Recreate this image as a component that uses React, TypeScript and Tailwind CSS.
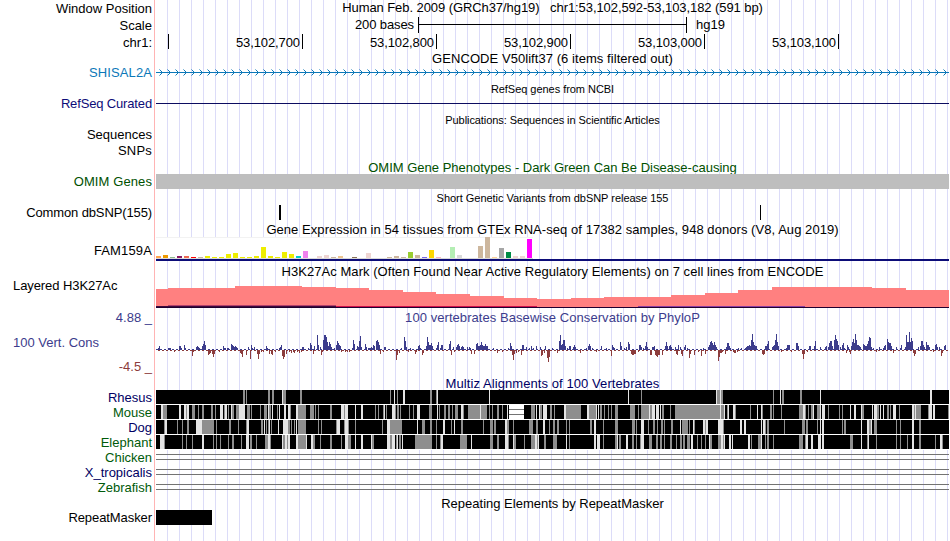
import type { ReactNode } from "react";

type Pair = [number, number];
type Chunk = { x: number; values: Pair[] };
type Tone = "g" | "l";
type Stripes = { x: number; tone: Tone; values: Pair[] };

const LEFT = 156;
const WIDTH = 793;

const labels = [
  { text: "Window Position", className: "h-[17px] leading-[17px] text-black" },
  { text: "Scale", className: "h-[17px] leading-[17px] text-black" },
  { text: "chr1:", className: "h-[16px] leading-[17px] text-black" },
  { text: "SHISAL2A", className: "mt-4 h-[14px] leading-[14px] tracking-[0.1px] text-[#0c78b8]" },
  { text: "RefSeq Curated", className: "mt-[17px] h-[15px] leading-[14px] tracking-[-0.15px] text-[#0c0c78]" },
  { text: "Sequences", className: "mt-[15px] h-[15px] leading-[16px] text-black" },
  { text: "SNPs", className: "h-4 leading-[18px] tracking-[0.2px] text-black" },
  { text: "OMIM Genes", className: "mt-4 h-[15px] leading-[16px] tracking-[0.1px] text-[#005000]" },
  { text: "Common dbSNP(155)", className: "mt-4 h-[15px] leading-[16px] tracking-[-0.12px] text-black" },
  { text: "FAM159A", className: "mt-[17px] h-[25px] leading-[27px] tracking-[0.14px] text-black" },
  {
    text: "Layered H3K27Ac",
    className: "mt-[17px] h-[29px] pl-[13px] text-left leading-[14px] tracking-[-0.08px] text-black",
  },
  { text: "4.88 _", className: "h-[18px] leading-[19px] text-[#3c3c8c]" },
  { text: "100 Vert. Cons", className: "h-[32px] pl-[13px] text-left leading-[33px] text-[#3c3c8c]" },
  { text: "-4.5 _", className: "h-[18px] leading-[18px] text-[#8c3c3c]" },
  { text: "Rhesus", className: "mt-[14px] h-[15px] leading-[16px] text-[#000064]" },
  { text: "Mouse", className: "h-[15px] leading-[16px] text-[#005a0a]" },
  { text: "Dog", className: "h-[15px] leading-[16px] text-[#000064]" },
  { text: "Elephant", className: "h-[15px] leading-[16px] text-[#005a0a]" },
  { text: "Chicken", className: "h-[15px] leading-[16px] text-[#005a0a]" },
  { text: "X_tropicalis", className: "h-[15px] leading-[16px] text-[#000064]" },
  { text: "Zebrafish", className: "h-[15px] leading-[16px] text-[#005a0a]" },
  { text: "RepeatMasker", className: "mt-[15px] h-[15px] leading-[16px] tracking-[-0.08px] text-black" },
];

// GTEx tissues: colour and bar height
const tissues: [string, number][] = [
  ["#ffa54f", 2], ["#ee9a00", 3], ["#8fbc8f", 1], ["#8b1c62", 2], ["#ee6a50", 2], ["#ff0000", 1],
  ["#cdb79e", 1], ["#eeee00", 2], ["#eeee00", 1], ["#eeee00", 1], ["#eeee00", 4], ["#eeee00", 5],
  ["#eeee00", 1], ["#eeee00", 1], ["#eeee00", 2], ["#eeee00", 11], ["#eeee00", 2], ["#eeee00", 1],
  ["#eeee00", 6], ["#eeee00", 4], ["#00cdcd", 2], ["#ee82ee", 7], ["#9ac0cd", 0], ["#eed5d2", 2],
  ["#eed5d2", 3], ["#cdb79e", 1], ["#eec591", 2], ["#8b7355", 0], ["#8b7355", 1], ["#cdaa7d", 0],
  ["#eed5d2", 5], ["#b452cd", 0], ["#7a378b", 0], ["#cdb79e", 1], ["#cdb79e", 2], ["#cdb79e", 1],
  ["#9acd32", 6], ["#cdb79e", 3], ["#7a67ee", 1], ["#ffd700", 8], ["#ffb6c1", 1], ["#cd9b1d", 0],
  ["#b4eeb4", 11], ["#d9d9d9", 3], ["#3a5fcd", 0], ["#1e90ff", 0], ["#cdb79e", 12], ["#cdb79e", 21],
  ["#ffd39b", 1], ["#a6a6a6", 10], ["#008b45", 6], ["#eed5d2", 2], ["#eed5d2", 2], ["#ff00ff", 19],
];

// H3K27Ac signal: start of each step and its top edge
const signal: Pair[] = [
  [156, 289], [168, 288], [235, 286], [302, 287], [336, 288], [369, 290], [403, 292], [436, 294],
  [470, 296], [504, 298], [537, 299], [571, 298], [604, 297], [671, 295], [705, 293], [738, 290],
  [772, 287], [872, 288], [906, 290], [949, 290],
];

const conservation: Chunk[] = [
  {
    x: 150,
    values: [
      [8, 2], [9, 4], [18, 2], [19, 2], [20, 2], [24, -2], [29, 4], [30, 4], [31, 2], [34, 5], [35, 2],
      [42, -6], [43, -2], [46, 3], [47, 4], [48, 3], [49, 2], [52, 4], [53, 6], [54, 9], [55, 5], [58, -5],
      [59, -4], [60, -3], [62, -4], [63, -7], [64, -4], [69, -2], [73, 4], [74, 2], [75, 2], [77, 2],
      [78, 2], [81, 6], [82, 5], [83, 4], [84, 3], [85, 4], [86, 3], [87, 2], [90, -3], [91, -4], [92, -7],
      [96, -5], [98, 3], [100, -9], [101, 5], [102, 2], [104, 3], [107, -4], [108, -9], [109, -4],
      [111, -2], [113, -2], [116, 4], [117, 2], [119, -4], [121, -4], [122, -5], [125, -2], [129, 2],
      [130, 3], [131, 5], [132, -6], [133, -9], [134, -7], [136, -4], [139, -2], [141, -3], [143, -2],
      [144, -3], [147, -2], [149, -3], [151, -2], [152, 3], [153, 3], [158, 2], [160, 7], [161, 5],
      [163, -4], [164, 4], [167, 15], [168, 5], [170, 3], [171, -5], [172, -2], [173, 10], [174, 15],
      [175, 15], [176, 13], [177, 8], [178, 4], [179, 8], [180, 6], [181, 3], [184, 2], [186, 5],
      [187, 9], [188, 7], [189, 5], [190, 4], [191, -2], [195, -2], [197, -2], [199, -2], [202, 2],
      [203, 10], [204, 6], [207, 4], [208, 3], [209, 9], [210, 14], [211, 3], [215, 6], [216, 3], [218, 2],
      [219, 2], [220, 2], [221, 3], [222, 2], [223, 5], [224, 4], [226, 9], [227, 10], [228, 8], [229, 5],
      [230, -4], [233, -2], [234, 3], [235, 3], [246, -10], [247, -5], [249, -3], [251, 2], [254, 13],
      [255, 9], [256, 3], [258, -2], [260, 2], [265, -4], [266, -2], [268, 4], [269, 5],
    ],
  },
  {
    x: 420,
    values: [
      [0, 2], [2, -5], [3, -3], [6, 4], [7, 13], [8, 8], [9, 5], [10, 5], [11, 7], [12, 4], [16, 2], [17, 5],
      [18, 8], [20, 2], [21, 5], [22, 5], [29, 6], [30, 9], [31, -5], [33, 3], [34, -2], [36, 3], [37, 5],
      [38, 6], [39, 4], [41, 3], [42, 4], [43, 3], [47, 3], [49, 3], [50, 2], [51, -4], [54, -4], [56, 6],
      [57, 7], [58, 4], [59, 4], [60, 5], [61, 8], [62, 5], [63, 4], [64, 4], [65, 6], [66, 4], [67, 4],
      [73, 2], [77, -3], [82, -2], [88, 2], [90, 7], [91, 4], [92, -5], [93, -10], [94, -4], [96, -3],
      [98, -2], [101, -5], [102, 5], [103, 5], [106, 3], [109, 2], [111, 4], [113, 2], [116, 4], [120, 3],
      [121, -6], [122, -5], [124, -3], [125, 4], [127, -8], [128, -12], [129, -7], [132, 2], [137, -3],
      [139, 9], [140, 15], [141, 5], [142, 6], [143, 10], [144, 10], [145, 4], [147, 2], [149, 4],
      [150, 4], [153, 3], [154, 5], [155, 3], [160, -3], [166, 2], [168, 4], [169, 6], [170, 4], [172, 2],
      [176, -2], [181, 4], [186, 2], [191, -6], [192, 5], [193, 3], [194, 2], [200, 8], [201, 4], [204, 2],
      [206, 3], [208, 8], [209, 6], [211, -4], [212, -5], [213, -5], [214, -4], [215, -4], [218, -2],
      [219, 5], [220, 5], [221, 3], [223, 2], [225, 4], [226, 8], [227, 3], [230, -5], [231, -5],
      [232, 3], [233, 3], [234, 4], [235, -5], [236, -6], [237, -7], [238, -5], [239, -5], [242, -5],
      [245, 4], [246, 8], [247, 4], [249, 4], [250, 5], [251, 3], [255, 3], [256, -4], [257, -5],
      [258, 5], [260, 3], [262, -6], [264, 3], [265, 5], [267, 2], [269, -4],
    ],
  },
  {
    x: 680,
    values: [
      [1, -4], [2, -6], [4, 2], [5, 5], [9, -8], [10, -4], [14, -5], [18, -2], [21, -6], [23, 2], [25, -4],
      [28, 3], [29, 5], [30, 8], [31, 9], [32, 7], [33, 5], [34, 8], [35, 5], [36, 3], [38, -11], [39, -7],
      [40, -3], [41, -3], [42, -2], [45, -4], [46, 3], [47, 7], [48, 7], [49, 4], [50, 2], [53, -2],
      [54, -3], [55, -3], [57, -2], [58, 2], [61, 2], [65, 2], [66, 3], [67, 4], [68, 4], [69, 5], [70, 4],
      [71, 10], [72, 16], [73, 8], [74, 5], [75, 4], [76, 4], [82, -4], [83, -5], [84, -4], [85, 4],
      [86, 4], [87, 6], [88, 9], [92, 3], [93, 4], [94, 5], [95, 10], [96, 16], [97, 8], [98, 4], [101, -2],
      [106, 2], [107, 5], [108, 5], [109, 5], [111, -2], [116, 7], [117, 7], [118, 4], [122, -4], [123, -9],
      [124, -4], [127, -2], [129, 4], [130, 4], [134, 4], [135, 9], [140, 3], [145, 3], [146, 4], [148, 3],
      [149, 7], [150, 9], [151, 9], [152, 4], [154, 10], [155, 15], [156, 11], [157, 9], [158, 5], [160, 3],
      [162, 5], [163, 7], [164, 2], [166, -3], [167, 5], [168, 3], [169, -2], [170, -4], [171, 4], [172, 8],
      [173, 11], [174, 7], [175, 16], [176, 10], [177, 5], [178, 5], [179, 4], [180, 3], [183, 6],
      [184, 5], [185, 4], [186, 4], [187, 6], [188, 9], [189, 13], [190, 12], [191, 3], [193, 2],
      [196, -2], [199, 3], [203, 2], [204, 4], [205, 5], [207, 11], [208, 8], [209, 7], [210, 7], [211, 4],
      [213, -3], [216, 3], [220, 2], [221, 5], [225, 3], [226, 15], [227, 8], [228, 8], [229, 18], [230, 8],
      [231, 12], [232, 9], [233, -3], [234, -6], [235, -4], [238, 3], [240, 4], [241, 9], [242, 9], [243, 5],
      [244, 3], [246, 8], [247, 5], [248, 5], [249, 3], [253, -2], [255, 5], [256, 6], [257, 3], [259, 3],
      [261, -6], [262, -3], [264, 4], [265, 5],
    ],
  },
];

const alignments: Record<string, Stripes[]> = {
  Rhesus: [
    { x: 150, tone: "g", values: [[93, 2], [96, 1], [118, 2], [122, 2], [133, 3], [150, 2], [240, 1], [247, 1]] },
    { x: 150, tone: "l", values: [[132, 1], [244, 1], [253, 2]] },
    { x: 420, tone: "g", values: [[10, 2], [16, 1], [221, 1]] },
    { x: 420, tone: "l", values: [[17, 1], [69, 1], [208, 1]] },
    { x: 680, tone: "g", values: [[37, 3], [41, 2], [93, 1], [102, 2], [120, 2]] },
    { x: 680, tone: "l", values: [[36, 1], [40, 1], [100, 1], [140, 1], [250, 2]] },
  ],
  Mouse: [
    {
      x: 150,
      tone: "g",
      values: [
        [13, 4], [36, 1], [42, 3], [48, 1], [52, 2], [61, 2], [65, 1], [74, 1], [78, 1], [82, 2], [86, 2],
        [88, 1], [97, 2], [99, 1], [101, 1], [110, 1], [114, 3], [119, 2], [127, 1], [140, 1], [148, 8],
        [160, 4], [165, 1], [168, 1], [180, 2], [194, 1], [225, 1], [228, 1], [233, 1], [236, 1], [245, 1],
        [247, 2], [250, 1], [259, 1], [263, 1],
      ],
    },
    {
      x: 150,
      tone: "l",
      values: [
        [11, 2], [29, 2], [34, 2], [37, 2], [70, 3], [75, 2], [81, 1], [89, 6], [118, 1], [122, 1], [129, 1],
        [134, 2], [138, 2], [146, 2], [191, 3], [195, 3], [205, 1], [211, 2], [234, 1], [242, 3], [267, 3],
      ],
    },
    {
      x: 420,
      tone: "g",
      values: [
        [9, 3], [19, 1], [24, 2], [28, 2], [32, 1], [35, 2], [37, 1], [43, 1], [48, 12], [61, 6], [69, 1],
        [72, 1], [77, 2], [82, 1], [111, 4], [120, 2], [130, 2], [134, 1], [146, 15], [169, 7], [180, 2],
        [184, 1], [188, 1], [191, 1], [195, 3], [210, 5], [218, 1], [221, 12], [242, 2], [250, 1], [255, 15],
      ],
    },
    {
      x: 420,
      tone: "l",
      values: [
        [17, 1], [41, 2], [60, 1], [87, 1], [116, 1], [119, 1], [123, 3], [126, 1], [144, 2], [167, 2],
        [176, 1], [178, 1], [229, 1], [232, 3], [236, 3], [240, 1],
      ],
    },
    {
      x: 680,
      tone: "g",
      values: [
        [0, 40], [41, 3], [47, 1], [55, 1], [70, 1], [82, 1], [90, 2], [93, 1], [101, 1], [119, 4], [125, 1],
        [128, 1], [131, 2], [137, 1], [138, 3], [148, 1], [159, 1], [162, 1], [182, 2], [197, 2], [207, 2],
        [210, 1], [219, 1], [234, 1], [236, 5], [248, 1], [268, 1],
      ],
    },
    {
      x: 680,
      tone: "l",
      values: [
        [40, 1], [44, 1], [48, 1], [53, 2], [77, 1], [81, 1], [123, 2], [133, 1], [140, 1], [142, 3], [170, 1],
        [174, 2], [181, 1], [192, 1], [194, 3], [200, 1], [203, 1], [213, 3], [232, 2], [235, 1], [249, 3],
        [253, 2],
      ],
    },
  ],
  Dog: [
    {
      x: 150,
      tone: "g",
      values: [
        [14, 1], [27, 1], [32, 1], [37, 2], [52, 12], [66, 1], [79, 2], [88, 1], [96, 1], [111, 2], [116, 1],
        [118, 1], [121, 1], [138, 2], [141, 1], [144, 1], [148, 8], [168, 1], [171, 1], [186, 1], [194, 1],
        [198, 1], [205, 1], [232, 1], [240, 12],
      ],
    },
    {
      x: 150,
      tone: "l",
      values: [
        [15, 2], [46, 6], [97, 2], [114, 1], [119, 1], [128, 1], [133, 5], [146, 1], [187, 3], [195, 1],
        [196, 2], [237, 3], [267, 1],
      ],
    },
    {
      x: 420,
      tone: "g",
      values: [
        [2, 3], [10, 2], [16, 1], [31, 1], [41, 2], [63, 1], [70, 3], [74, 2], [87, 2], [93, 1], [109, 4],
        [116, 2], [129, 1], [133, 2], [137, 2], [146, 1], [149, 1], [170, 2], [183, 1], [195, 3], [212, 3],
        [216, 1], [228, 1], [233, 2], [237, 1], [241, 2], [244, 1], [251, 2], [263, 1], [267, 1],
      ],
    },
    { x: 420, tone: "l", values: [[23, 2], [34, 1], [85, 2], [123, 2], [174, 2], [221, 3], [260, 1]] },
    {
      x: 680,
      tone: "g",
      values: [
        [2, 1], [4, 3], [9, 1], [14, 1], [25, 1], [43, 1], [85, 1], [87, 2], [104, 1], [122, 3], [126, 2],
        [137, 1], [162, 1], [164, 2], [189, 2], [194, 3], [216, 1], [220, 1], [239, 2],
      ],
    },
    {
      x: 680,
      tone: "l",
      values: [
        [13, 1], [23, 2], [26, 2], [38, 5], [60, 2], [64, 2], [81, 1], [83, 2], [140, 1], [142, 2], [181, 1],
        [187, 2], [191, 1], [232, 2],
      ],
    },
  ],
  Elephant: [
    {
      x: 150,
      tone: "g",
      values: [
        [14, 1], [32, 1], [36, 1], [42, 1], [63, 1], [66, 1], [70, 1], [78, 1], [82, 2], [91, 1], [100, 2],
        [106, 1], [115, 2], [117, 1], [120, 1], [133, 2], [137, 1], [148, 8], [163, 2], [170, 1], [180, 2],
        [191, 1], [198, 3], [222, 2], [240, 2], [246, 1], [249, 2], [265, 5],
      ],
    },
    {
      x: 150,
      tone: "l",
      values: [
        [10, 4], [52, 2], [96, 3], [118, 2], [132, 1], [135, 2], [138, 2], [146, 2], [156, 1], [161, 2],
        [195, 3], [205, 1], [211, 2], [221, 1], [237, 3], [242, 3], [247, 1], [252, 1],
      ],
    },
    {
      x: 420,
      tone: "g",
      values: [
        [0, 12], [16, 1], [20, 1], [40, 7], [70, 3], [77, 2], [88, 1], [94, 2], [104, 1], [111, 4], [117, 1],
        [124, 2], [133, 4], [149, 1], [183, 1], [195, 2], [199, 2], [212, 2], [216, 1], [220, 1], [229, 3],
        [236, 2], [240, 2], [244, 1], [250, 2], [256, 1], [260, 2], [263, 2], [267, 3],
      ],
    },
    {
      x: 420,
      tone: "l",
      values: [[21, 2], [51, 1], [85, 3], [93, 1], [115, 2], [118, 1], [146, 1], [174, 2], [177, 3], [197, 1], [206, 2], [221, 3]],
    },
    {
      x: 680,
      tone: "g",
      values: [
        [0, 2], [7, 3], [17, 1], [21, 1], [25, 1], [30, 2], [38, 3], [43, 1], [71, 1], [78, 3], [85, 1],
        [87, 2], [93, 1], [119, 4], [125, 1], [170, 3], [187, 1], [196, 1], [216, 1], [220, 1], [227, 1],
        [239, 2], [255, 1], [262, 1],
      ],
    },
    {
      x: 680,
      tone: "l",
      values: [
        [11, 2], [29, 1], [41, 2], [44, 1], [49, 2], [52, 1], [68, 2], [81, 1], [126, 2], [131, 2], [138, 3],
        [142, 2], [181, 1], [188, 1], [232, 2], [260, 2],
      ],
    },
  ],
};

const Title = ({ children, className }: { children: ReactNode; className: string }) => (
  <div className={`text-center whitespace-pre ${className}`}>{children}</div>
);

const Canvas = ({ top, height, children }: { top: number; height: number; children: ReactNode }) => (
  <svg
    className="block shrink-0"
    width={WIDTH}
    height={height}
    viewBox={`${LEFT} ${top} ${WIDTH} ${height}`}
    shapeRendering="crispEdges"
  >
    {children}
  </svg>
);

const GeneTrack = () => (
  <Canvas top={66} height={14}>
    <rect x={LEFT} y={72} width={WIDTH} height={1} fill="#0c78b8" />
    {Array.from({ length: 99 }, (_, i) => (
      <path
        key={i}
        d={`M${159.5 + i * 8} 69.5l3 3l-3 3`}
        fill="none"
        stroke="#0c78b8"
        strokeWidth={1}
        shapeRendering="auto"
      />
    ))}
  </Canvas>
);

const ExpressionTrack = () => (
  <Canvas top={237} height={25}>
    <rect x={156} y={237} width={377} height={22} fill="#fff" />
    <rect x={156} y={237} width={377} height={1} fill="#f2f2f2" />
    <rect x={156} y={258} width={377} height={1} fill="#d9d9d9" />
    {tissues.map(([fill, h], i) => (
      <rect key={i} x={156 + i * 7} y={258 - h} width={5} height={h} fill={fill} />
    ))}
    <rect x={LEFT} y={259} width={WIDTH} height={2} fill="#0c0c78" />
  </Canvas>
);

const AcetylationTrack = () => (
  <Canvas top={279} height={29}>
    {signal.slice(0, -1).map(([x, y], i) => (
      <rect key={x} x={x} y={y} width={signal[i + 1][0] - x} height={307 - y} fill="#ff8080" />
    ))}
    <rect x={168} y={305} width={168} height={1} fill="#b3406b" />
    <rect x={156} y={306} width={180} height={1} fill="#3c0a3c" />
    <rect x={336} y={306} width={201} height={1} fill="#d0104a" />
    <rect x={638} y={306} width={167} height={1} fill="#8a3ca0" />
    <rect x={LEFT} y={307} width={WIDTH} height={1} fill="#200030" />
  </Canvas>
);

const ConservationTrack = () => (
  <Canvas top={326} height={50}>
    {Array.from({ length: 198 }, (_, i) => (
      <g key={i}>
        <rect x={156 + i * 4} y={349} width={2} height={1} fill="#3c3c8c" />
        <rect x={158 + i * 4} y={350} width={2} height={1} fill="#8c3c3c" />
      </g>
    ))}
    {conservation.map((chunk) =>
      chunk.values.map(([x, v]) => (
        <rect
          key={chunk.x + x}
          x={chunk.x + x}
          y={v > 0 ? 350 - v : 350}
          width={1}
          height={Math.abs(v)}
          fill={v > 0 ? "#3c3c8c" : "#8c3c3c"}
        />
      )),
    )}
  </Canvas>
);

const AlignmentTrack = ({ name, top }: { name: string; top: number }) => (
  <Canvas top={top} height={15}>
    <rect x={LEFT} y={top} width={WIDTH} height={15} fill="#fff" />
    <rect x={LEFT} y={top} width={WIDTH} height={14} fill="#000" />
    {alignments[name].map((stripes) =>
      stripes.values.map(([x, w]) => (
        <rect
          key={`${stripes.x}-${x}`}
          x={stripes.x + x}
          y={top}
          width={w}
          height={14}
          fill={stripes.tone === "g" ? "#8e8e8e" : "#e4e4e4"}
        />
      )),
    )}
    {name === "Mouse" && (
      <g>
        <rect x={509} y={405} width={15} height={14} fill="#fff" />
        <rect x={509} y={409} width={15} height={1} fill="#737373" />
        <rect x={509} y={414} width={15} height={1} fill="#737373" />
      </g>
    )}
  </Canvas>
);

const UnalignedTrack = () => (
  <div className="h-[15px] pt-1">
    <div className="h-[6px] border-y border-[#737373]" />
  </div>
);

const App = () => (
  <main className="flex h-[541px] w-[950px] overflow-hidden bg-white font-['Liberation_Sans',Arial,sans-serif] text-[13px] text-black">
    <aside className="mr-px flex w-[155px] shrink-0 flex-col border-r border-[#ffb4b4] pr-[2px] text-right whitespace-pre">
      {labels.map((label) => (
        <div key={label.text} className={`shrink-0 ${label.className}`}>
          {label.text}
        </div>
      ))}
    </aside>

    <section className="flex w-[793px] shrink-0 flex-col bg-[repeating-linear-gradient(to_right,transparent_0_11px,#dcdcf8_11px_12px)]">
      <Title className="h-[17px] leading-[15px] tracking-[-0.075px]">
        {"Human Feb. 2009 (GRCh37/hg19)   chr1:53,102,592-53,103,182 (591 bp)"}
      </Title>
      <div className="flex h-[17px] leading-[15px]">
        <span className="w-[258px] text-right tracking-[-0.1px]">200 bases</span>
        <div className="ml-1 flex h-4 w-[269px] border-x border-black pt-[7px]">
          <div className="h-px w-full bg-black" />
        </div>
        <span className="ml-[9px]">hg19</span>
      </div>
      <div className="flex h-4 leading-[17px]">
        <div className="h-[15px] w-[13px] border-r border-black" />
        {["53,102,700", "53,102,800", "53,102,900", "53,103,000", "53,103,100"].map((position) => (
          <div
            key={position}
            className="h-[15px] w-[134px] border-r border-black pr-[2px] text-right tracking-[-0.1px]"
          >
            {position}
          </div>
        ))}
      </div>

      <Title className="h-4 leading-[17px] tracking-[0.06px]">GENCODE V50lift37 (6 items filtered out)</Title>
      <GeneTrack />

      <Title className="h-[17px] text-[11px] leading-[18px] tracking-[-0.04px]">RefSeq genes from NCBI</Title>
      <div className="h-[15px] pt-[6px]">
        <div className="h-px bg-[#0c0c60]" />
      </div>

      <Title className="h-[46px] text-[11px] leading-[17px] tracking-[-0.07px]">
        Publications: Sequences in Scientific Articles
      </Title>

      <Title className="h-4 leading-[19px] text-[#005000]">
        OMIM Gene Phenotypes - Dark Green Can Be Disease-causing
      </Title>
      <div className="h-[15px] bg-[#bebebe]" />

      <Title className="h-4 text-[11px] leading-[18px] tracking-[-0.03px]">
        Short Genetic Variants from dbSNP release 155
      </Title>
      <div className="flex h-[15px]">
        <div className="ml-[123px] h-[15px] w-[2px] bg-black" />
        <div className="ml-[479px] h-[15px] w-px bg-black" />
      </div>

      <Title className="h-[17px] leading-[19px] tracking-[0.055px]">
        Gene Expression in 54 tissues from GTEx RNA-seq of 17382 samples, 948 donors (V8, Aug 2019)
      </Title>
      <ExpressionTrack />

      <Title className="h-[17px] leading-[20px] tracking-[0.05px]">
        H3K27Ac Mark (Often Found Near Active Regulatory Elements) on 7 cell lines from ENCODE
      </Title>
      <AcetylationTrack />

      <Title className="h-[18px] leading-[19px] tracking-[0.06px] text-[#3c3c8c]">
        100 vertebrates Basewise Conservation by PhyloP
      </Title>
      <ConservationTrack />

      <Title className="h-[14px] leading-[16px] tracking-[0.08px] text-[#000064]">
        Multiz Alignments of 100 Vertebrates
      </Title>
      <AlignmentTrack name="Rhesus" top={390} />
      <AlignmentTrack name="Mouse" top={405} />
      <AlignmentTrack name="Dog" top={420} />
      <AlignmentTrack name="Elephant" top={435} />
      <UnalignedTrack />
      <UnalignedTrack />
      <UnalignedTrack />

      <Title className="h-[15px] leading-[17px]">Repeating Elements by RepeatMasker</Title>
      <div className="h-[15px] w-14 bg-black" />
    </section>
  </main>
);

export default App;
